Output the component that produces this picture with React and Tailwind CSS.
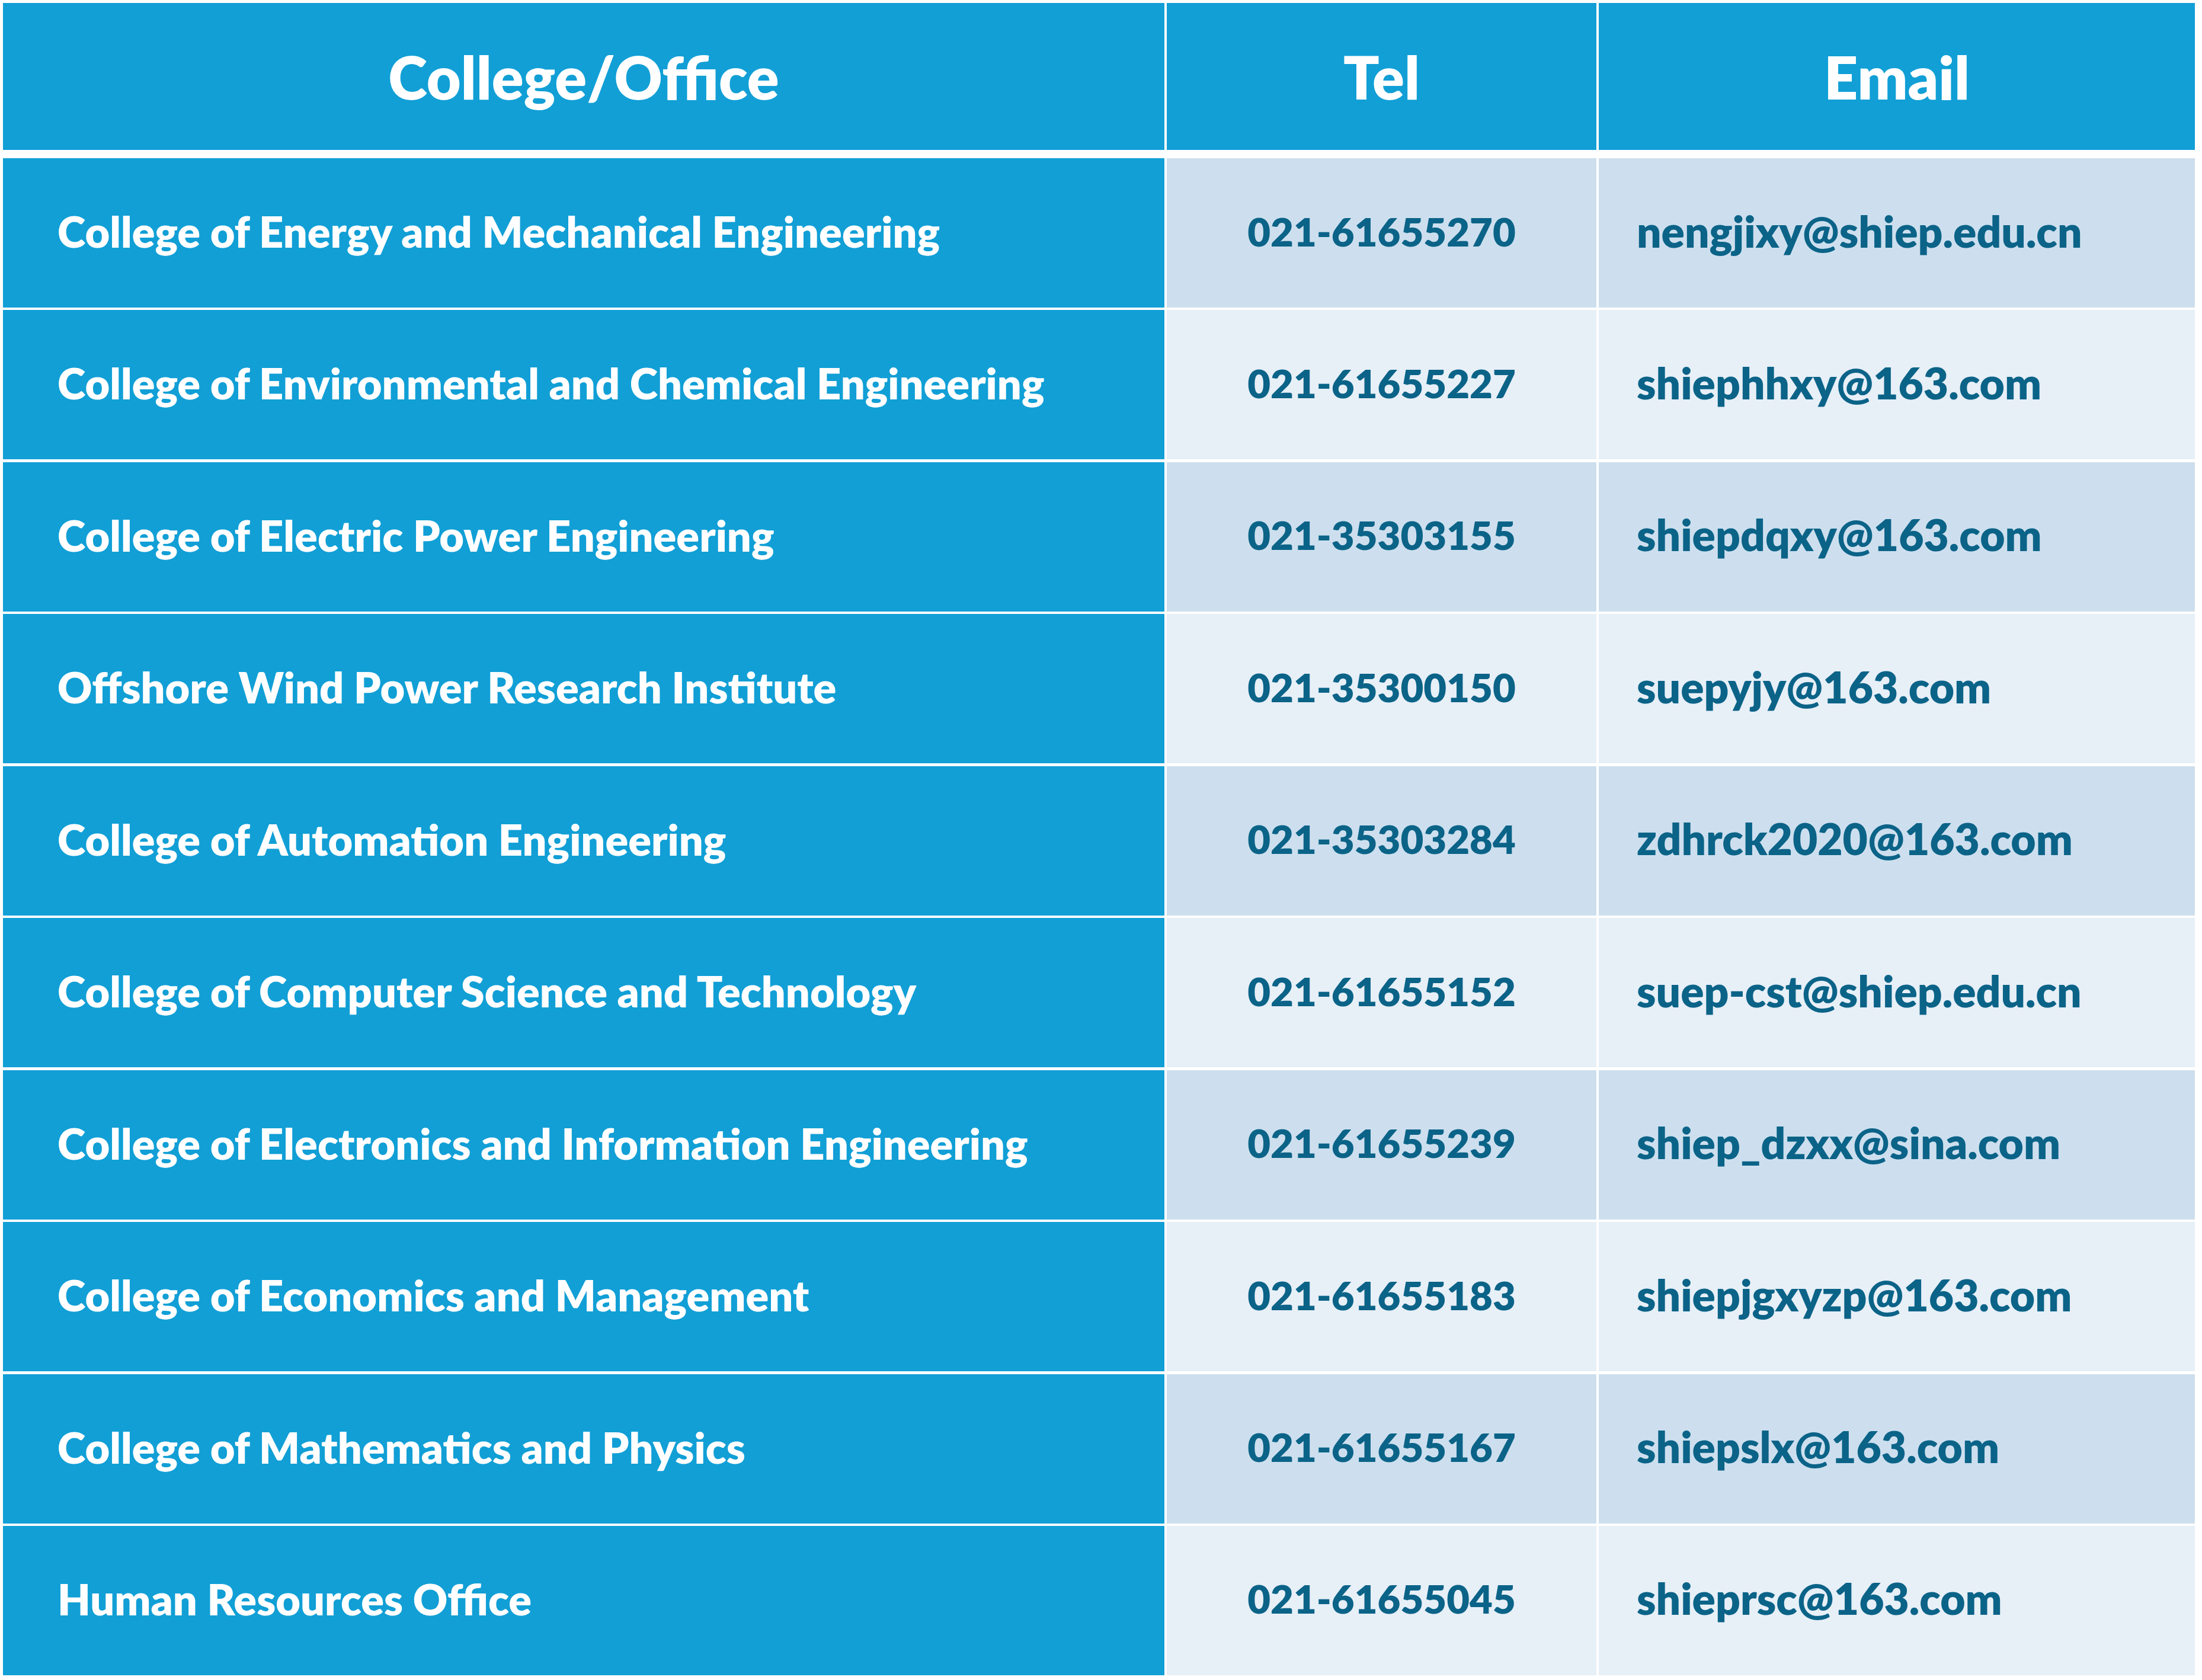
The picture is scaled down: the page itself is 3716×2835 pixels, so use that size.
const rows = [
  ["College of Energy and Mechanical Engineering", "021-61655270", "nengjixy@shiep.edu.cn"],
  ["College of Environmental and Chemical Engineering", "021-61655227", "shiephhxy@163.com"],
  ["College of Electric Power Engineering", "021-35303155", "shiepdqxy@163.com"],
  ["Offshore Wind Power Research Institute", "021-35300150", "suepyjy@163.com"],
  ["College of Automation Engineering", "021-35303284", "zdhrck2020@163.com"],
  ["College of Computer Science and Technology", "021-61655152", "suep-cst@shiep.edu.cn"],
  ["College of Electronics and Information Engineering", "021-61655239", "shiep_dzxx@sina.com"],
  ["College of Economics and Management", "021-61655183", "shiepjgxyzp@163.com"],
  ["College of Mathematics and Physics", "021-61655167", "shiepslx@163.com"],
  ["Human Resources Office", "021-61655045", "shieprsc@163.com"],
];

export default function App() {
  return (
    <div className="bg-white w-[3716px] h-[2835px] pt-[5px] pl-[5px] font-['Lato','Liberation_Sans',sans-serif] font-extrabold">
      <div className="w-[3699px]">
        <div className="grid grid-cols-[1960px_725px_1006px] gap-x-[4px] h-[248px] text-white text-[100px] leading-none">
          <div className="bg-[#119fd6] flex items-center justify-center">College/Office</div>
          <div className="bg-[#119fd6] flex items-center justify-center">Tel</div>
          <div className="bg-[#119fd6] flex items-center justify-center">Email</div>
        </div>
        <div className="mt-[14px] flex flex-col gap-[4.44px] leading-none">
          {rows.map((r, i) => {
            const bg = i % 2 === 0 ? "bg-[#cddfee]" : "bg-[#e7eff7]";
            return (
              <div key={i} className="grid grid-cols-[1960px_725px_1006px] gap-x-[4px] h-[252px]">
                <div className="bg-[#119fd6] text-white text-[72px] flex items-center pl-[92px] pb-[6px]">{r[0]}</div>
                <div className={`${bg} text-[#0b6388] text-[67px] flex items-center justify-center pb-[6px]`}>{r[1]}</div>
                <div className={`${bg} text-[#0b6388] text-[73px] flex items-center pl-[64px] pb-[6px]`}>{r[2]}</div>
              </div>
            );
          })}
        </div>
      </div>
    </div>
  );
}
